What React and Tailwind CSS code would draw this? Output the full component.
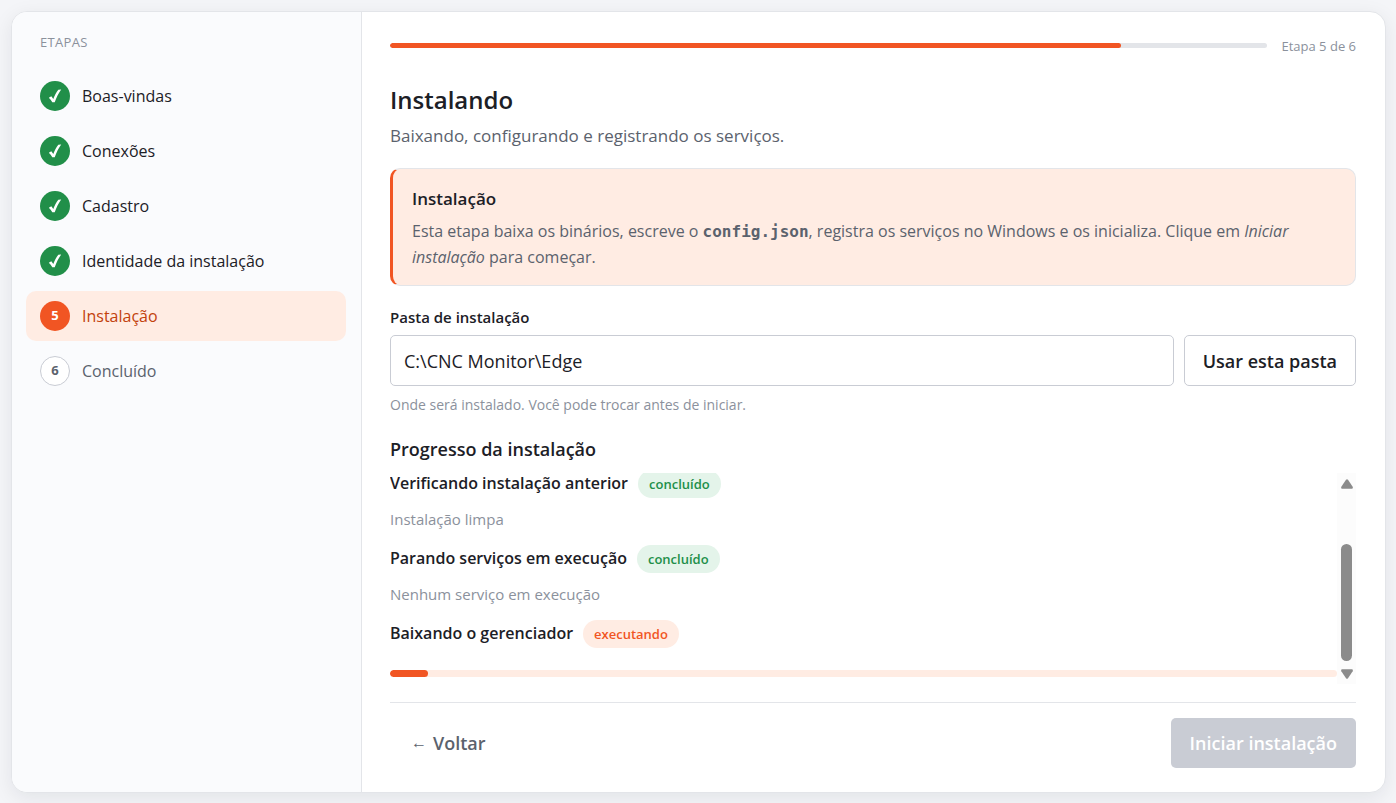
import { useState } from "react";

const steps = [
  { id: 1, label: "Boas-vindas", status: "done" },
  { id: 2, label: "Conexões", status: "done" },
  { id: 3, label: "Cadastro", status: "done" },
  { id: 4, label: "Identidade da instalação", status: "done" },
  { id: 5, label: "Instalação", status: "active" },
  { id: 6, label: "Concluído", status: "pending" },
];

const tasks = [
  { title: "Verificando instalação anterior", status: "concluído", detail: "Instalação limpa" },
  { title: "Parando serviços em execução", status: "concluído", detail: "Nenhum serviço em execução" },
  { title: "Baixando o gerenciador", status: "executando", progress: 4 },
];

const itemStyles = {
  done: "text-[#1c2026]",
  active: "bg-[#ffece3] text-[#c2410c]",
  pending: "text-[#5b626d]",
};

const bulletStyles = {
  done: "bg-[#218f49] text-white",
  active: "bg-[#f15523] text-white",
  pending: "border border-[#c9ccd4] bg-white text-[#5b626d]",
};

const badgeStyles = {
  concluído: "bg-[#e4f4ea] text-[#218f49]",
  executando: "bg-[#ffece3] text-[#f15523]",
};

function CheckMark() {
  return (
    <svg width="14" height="14" viewBox="0 0 14 14" fill="currentColor" aria-hidden="true">
      <path d="M.8 8.700 3.300 7.200 5.300 9.900C6.600 6.500 8.300 3.300 10.300.7L13.200.4C10.500 4.200 8.300 8.500 6.700 13.300H4.300C3.300 11.500 2.100 10 .8 8.700Z" />
    </svg>
  );
}

function StepItem({ step }) {
  return (
    <li
      aria-current={step.status === "active" ? "step" : undefined}
      className={`flex items-center gap-3 rounded-[10px] px-3.5 py-2.5 text-base ${itemStyles[step.status]}`}
    >
      <span
        className={`flex size-[30px] shrink-0 items-center justify-center rounded-full text-[13px] font-bold ${bulletStyles[step.status]}`}
      >
        {step.status === "done" ? <CheckMark /> : step.id}
      </span>
      <span>{step.label}</span>
    </li>
  );
}

function Task({ task }) {
  return (
    <li className="shrink-0">
      <div className="flex h-7 items-center gap-2.5">
        <span className="pb-0.5 text-base font-semibold text-[#1c2026]">{task.title}</span>
        <span
          className={`flex h-7 items-center rounded-full px-[11px] pt-0.5 text-[13px] font-semibold ${badgeStyles[task.status]}`}
        >
          {task.status}
        </span>
      </div>
      {task.detail && (
        <p className="mt-[9px] mb-3.5 text-[15px] leading-6 text-[#8b919c]">{task.detail}</p>
      )}
      {task.progress && (
        <div
          role="progressbar"
          aria-label={task.title}
          aria-valuenow={task.progress}
          className="mt-[22px] mb-[7px] h-[7px] overflow-hidden rounded-full bg-[#ffece3]"
        >
          <div
            className="h-full rounded-full bg-[#f15523]"
            style={{ width: `${task.progress}%` }}
          ></div>
        </div>
      )}
    </li>
  );
}

function ScrollTrack() {
  return (
    <div
      aria-hidden="true"
      className="flex w-[19px] shrink-0 flex-col items-center bg-[#fcfcfc] pt-1.5 pb-[5px] text-[#8b8b8b]"
    >
      <svg width="12" height="10" viewBox="0 0 12 10" fill="currentColor">
        <path d="M5 .8Q6-.4 7 .8L11.700 7.800Q12.300 9.600 10.800 9.800H1.200Q-.3 9.600.3 7.800Z" />
      </svg>
      <div className="mt-auto mb-2 h-[117px] w-[11px] rounded-full bg-[#8b8b8b]"></div>
      <svg width="12" height="10" viewBox="0 0 12 10" fill="currentColor">
        <path d="M5 9.200Q6 10.400 7 9.200L11.700 2.200Q12.300.4 10.800.2H1.200Q-.3.4.3 2.200Z" />
      </svg>
    </div>
  );
}

function App() {
  const [folder, setFolder] = useState("C:\\CNC Monitor\\Edge");

  return (
    <div className="flex h-screen bg-[#f4f5f8] p-[11px] pr-2.5 pb-2.5 font-['Open_Sans','Noto_Sans',sans-serif] text-[#1c2026]">
      <div className="flex min-w-0 flex-1 overflow-hidden rounded-2xl border border-[#e3e5e9] bg-white shadow-[0_5px_20px_rgba(16,24,40,0.08)]">
        <aside className="w-[350px] shrink-0 border-r border-[#e3e5e9] bg-[#fafbfd] pt-5 pr-[15px] pl-3.5">
          <h2 className="px-3.5 text-[13px] leading-5 tracking-wide text-[#8b919c]">ETAPAS</h2>
          <ol className="mt-[19px] flex flex-col gap-[5px]">
            {steps.map((step) => (
              <StepItem key={step.id} step={step} />
            ))}
          </ol>
        </aside>

        <main className="flex min-w-0 flex-1 flex-col pr-[29px] pb-6 pl-7">
          <div className="mt-6 flex h-5 items-center gap-3.5">
            <div
              role="progressbar"
              aria-label="Etapas concluídas"
              aria-valuenow={5}
              aria-valuemax={6}
              className="mb-0.5 h-[5px] flex-1 overflow-hidden rounded-full bg-[#e3e5e9]"
            >
              <div className="h-full w-5/6 rounded-full bg-[#f15523]"></div>
            </div>
            <span className="pt-0.5 text-[13px] text-[#8b919c]">Etapa 5 de 6</span>
          </div>

          <h1 className="mt-[26px] text-2xl leading-9 font-semibold">Instalando</h1>
          <p className="mt-1.5 text-[17px] leading-6 text-[#5b626d]">
            Baixando, configurando e registrando os serviços.
          </p>

          <section className="mt-5 rounded-[10px] border border-l-[3px] border-[#e3e5e9] border-l-[#f15523] bg-[#ffece3] px-[19px] pt-[18px] pb-[15px]">
            <h2 className="text-[17px] leading-6 font-semibold">Instalação</h2>
            <p className="mt-[7px] text-base leading-[26px] text-[#5b626d]">
              Esta etapa baixa os binários, escreve o{" "}
              <code className="font-['DejaVu_Sans_Mono',monospace] text-base font-bold">config.json</code>,
              registra os serviços no Windows e os inicializa. Clique em <em>Iniciar instalação</em> para
              começar.
            </p>
          </section>

          <label htmlFor="folder" className="mt-[21px] text-[15px] leading-5 font-semibold">
            Pasta de instalação
          </label>
          <div className="mt-2 flex gap-2.5">
            <input
              id="folder"
              type="text"
              value={folder}
              onChange={(e) => setFolder(e.target.value)}
              className="h-[51px] min-w-0 flex-1 rounded-[5px] border border-[#c9ccd4] bg-white px-[13px] text-lg"
            />
            <button
              type="button"
              className="h-[51px] rounded-[5px] border border-[#c9ccd4] bg-white px-[18px] text-lg font-semibold"
            >
              Usar esta pasta
            </button>
          </div>
          <p className="mt-[9px] text-sm leading-5 text-[#8b919c]">
            Onde será instalado. Você pode trocar antes de iniciar.
          </p>

          <h2 className="mt-[22px] text-lg leading-6 font-semibold">Progresso da instalação</h2>
          <div className="mt-3 flex min-h-0 flex-1">
            <ul className="flex min-w-0 flex-1 flex-col justify-end overflow-hidden">
              {tasks.map((task) => (
                <Task key={task.title} task={task} />
              ))}
            </ul>
            <ScrollTrack />
          </div>

          <footer className="mt-[18px] flex items-center justify-between border-t border-[#e3e5e9] pt-[15px]">
            <button
              type="button"
              className="flex h-[50px] items-center gap-1.5 rounded-[5px] px-[21px] text-lg font-semibold text-[#5b626d]"
            >
              <span className="font-['Liberation_Sans',sans-serif] text-base font-normal">←</span>
              Voltar
            </button>
            <button
              type="button"
              disabled
              className="h-[50px] rounded-[5px] bg-[#c9ccd4] px-[19px] text-lg font-semibold text-white"
            >
              Iniciar instalação
            </button>
          </footer>
        </main>
      </div>
    </div>
  );
}

export default App;
